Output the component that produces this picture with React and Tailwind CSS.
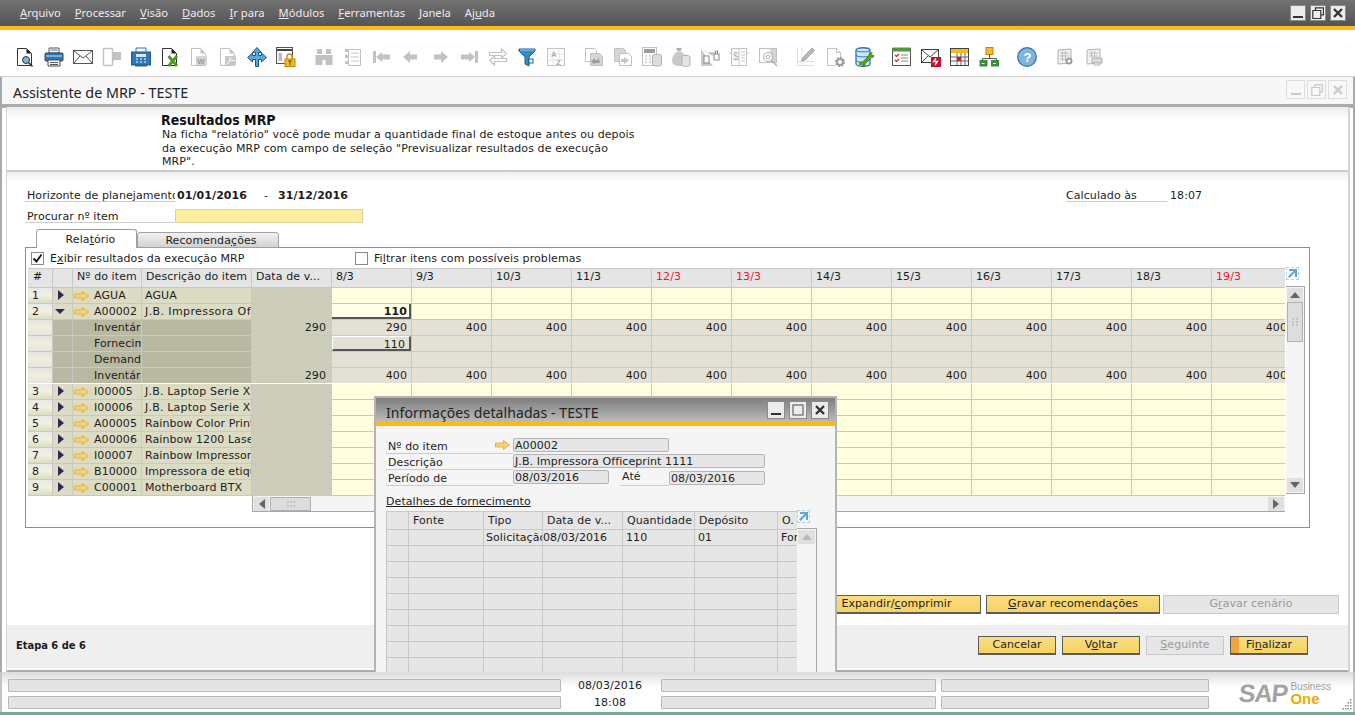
import { Fragment } from "react";

const G = "#c2c2c2"; // disabled icon grey
const D = "#b0b0b0";

const Ico = ({ children }) => (
  <svg width="20" height="20" viewBox="0 0 20 20" fill="none" className="shrink-0">
    {children}
  </svg>
);

const Page = ({ c = G, fold = G }) => (
  <>
    <path d="M2.500 1.500h9l5 5v12h-14z" fill="#fff" stroke={c} />
    <path d="M11.500 1.500l5 5h-5z" fill={fold} />
  </>
);

const toolbar = [
  [
    <Ico>
      <Page c="#333" fold="#222" />
      <circle cx="11" cy="13" r="3.500" fill="#7fb2d6" stroke="#333" />
      <path d="M13.500 15.500l4 4" stroke="#333" strokeWidth="1.600" />
    </Ico>,
    <Ico>
      <path d="M5 1h10v5H5z" fill="#fff" stroke="#555" />
      <path d="M6.500 3h7" stroke="#2a78b8" />
      <rect x="1" y="6" width="18" height="8" rx="1" fill="#2a78b8" stroke="#444" />
      <path d="M2 9h16" stroke="#cfe2f0" />
      <path d="M4 13h12v6H4z" fill="#fff" stroke="#444" />
      <path d="M6 15.500h8M6 17.500h8" stroke="#555" />
    </Ico>,
    <Ico>
      <rect x="0.500" y="3.500" width="19" height="13" fill="#fff" stroke="#555" />
      <path d="M1 4l9 7 9-7M1 16l6-7M19 16l-6-7" stroke="#555" />
    </Ico>,
    <Ico>
      <rect x="1.500" y="1.500" width="9" height="17" rx="1" fill="#fff" stroke={G} strokeWidth="1.400" />
      <path d="M10 5h9v8h-6l-3 2z" fill={G} />
    </Ico>,
    <Ico>
      <path d="M5 1h10v5H5z" fill="#fff" stroke="#2a78b8" />
      <rect x="0.500" y="5" width="19" height="13" fill="#2a78b8" stroke="#1d5f94" />
      <rect x="5" y="7" width="10" height="3" fill="#d7e8f4" />
      <path d="M5 12h2M9 12h2M13 12h2M5 15h2M9 15h2M13 15h2" stroke="#fff" />
      <path d="M4 18h12v1.500H4z" fill="#555" />
    </Ico>,
    <Ico>
      <Page c="#333" fold="#222" />
      <path d="M8.500 9l8.500 10M17 9L8.500 19" stroke="#4e9a1e" strokeWidth="2.800" />
    </Ico>,
    <Ico>
      <Page />
      <rect x="7" y="9" width="11" height="9" fill="#d4d4d4" />
      <text x="8.300" y="16.500" fontSize="8" fontWeight="700" fill="#9a9a9a" fontFamily="Liberation Sans">W</text>
    </Ico>,
    <Ico>
      <Page />
      <rect x="7" y="9" width="11" height="9" fill="#c8c8c8" />
      <path d="M8.500 17c3-1 4-4 3.600-7M11 14c2-1 4-1 6 0" stroke="#fff" />
    </Ico>,
    <Ico>
      <path d="M10 0.500l4.500 5h-3v3h3v-2.500l5 4.500-5 4.500V12.500h-3V19.500h-3V12.500h-3V15l-5-4.500 5-4.500v2.500h3v-3h-3z" fill="#5ea5d8" stroke="#14578f" strokeWidth="1" />
    </Ico>,
    <Ico>
      <rect x="0.500" y="0.500" width="16" height="16" fill="#fff" stroke="#555" />
      <path d="M1 3h15" stroke="#444" strokeWidth="2" />
      <rect x="2.500" y="6" width="3.500" height="8" fill="#bbb" />
      <path d="M11 12V9.500a2.500 2.500 0 015 0V12" stroke="#d28a10" strokeWidth="1.300" />
      <rect x="9" y="12" width="10" height="7.500" fill="#f5ba2a" stroke="#c98300" />
      <path d="M12 14h4M14 14v4" stroke="#6a4a00" />
    </Ico>,
  ],
  [
    <Ico>
      <path d="M3 2h5v5H3zM12 2h5v5h-5z" fill={G} />
      <path d="M1.500 8h7v10h-7zM11.500 8h7v10h-7zM8 8h4v5H8z" fill={G} />
    </Ico>,
    <Ico>
      <path d="M5.500 2.500h12v16h-12z" fill="#fff" stroke={G} />
      <path d="M2 2h3v3H2zM2 8h3v3H2zM2 14h3v3H2z" fill={G} />
      <path d="M8 6h8M8 10h8M8 14h8" stroke={G} />
    </Ico>,
    <Ico>
      <path d="M1 4h3v12H1zM10 5v10l-6-5zM10 7.500h8v5h-8z" fill={G} />
    </Ico>,
    <Ico>
      <path d="M9 4v12l-7-6zM9 7.500h7v5H9z" fill={G} />
    </Ico>,
    <Ico>
      <path d="M11 4v12l7-6zM11 7.500H4v5h7z" fill={G} />
    </Ico>,
    <Ico>
      <path d="M19 4h-3v12h3zM10 5v10l6-5zM10 7.500H2v5h8z" fill={G} />
    </Ico>,
    <Ico>
      <path d="M1.500 8.500v-3h12V2l5 4.500-5 4.500V8.500zM18.500 11.500v3h-12V18l-5-4.500 5-4.500v2.500z" fill="#fff" stroke={G} strokeWidth="1.200" />
    </Ico>,
    <Ico>
      <path d="M2 2h16v2l-6 6v9l-4-2v-7L2 4z" fill="#2f8fc4" stroke="#16608f" />
      <path d="M3 3h14" stroke="#9fd0ec" />
      <rect x="12" y="12" width="4" height="4" fill="#fff" stroke="#16608f" />
    </Ico>,
    <Ico>
      <rect x="1.500" y="1.500" width="17" height="17" fill="#fff" stroke={G} />
      <path d="M1.500 7h17M1.500 13h17M7 1.500v17M13 1.500v17" stroke="#e2e2e2" />
      <text x="5" y="10" fontSize="8" fontWeight="700" fill={D} fontFamily="Liberation Sans">A</text>
      <text x="10" y="18" fontSize="8" fontWeight="700" fill={D} fontFamily="Liberation Sans">Z</text>
    </Ico>,
  ],
  [
    <Ico>
      <path d="M1.500 1.500h9l2 2v11h-11z" fill="#fff" stroke={G} />
      <path d="M6.500 6.500h9l3 3v9h-12z" fill="#d6d6d6" stroke={G} />
      <path d="M14 9v4h-3v-2l-4 3.500 4 3.500v-2h5" fill="#9e9e9e" />
    </Ico>,
    <Ico>
      <path d="M1.500 1.500h9l2 2v11h-11z" fill="#d6d6d6" stroke={G} />
      <path d="M6.500 6.500h9l3 3v9h-12z" fill="#fff" stroke={G} />
      <path d="M8 12h3v-2l5 3.500-5 3.500v-2H8z" fill="#c4c4c4" />
    </Ico>,
    <Ico>
      <rect x="0.500" y="0.500" width="14" height="18" fill="#fff" stroke={G} />
      <rect x="2" y="2" width="11" height="4" fill="#9d9d9d" />
      <path d="M3 9h2M7 9h2M3 12h2M7 12h2M3 15h2M7 15h2" stroke={D} />
      <ellipse cx="15" cy="9" rx="4.500" ry="1.800" fill="#ddd" stroke={D} />
      <path d="M10.500 9v8.500c0 2 9 2 9 0V9" fill="#ddd" stroke={D} />
    </Ico>,
    <Ico>
      <path d="M5 1h6l-1.500 3h-3z" fill={D} />
      <path d="M6 4.500h4c4 2 5 7 5 9 0 4-3 5.500-7 5.500s-7-1.500-7-5.500c0-3 2-7 5-9z" fill="#c9c9c9" />
      <ellipse cx="15" cy="10" rx="4" ry="1.600" fill="#e4e4e4" stroke={D} />
      <path d="M11 10v8c0 2 8 2 8 0v-8" fill="#e4e4e4" stroke={D} />
    </Ico>,
    <Ico>
      <path d="M1 2l5 3.500h7V9M1 2v17h12" fill="#c9c9c9" />
      <path d="M9 6h6" stroke={D} />
      <rect x="4" y="9" width="5" height="7" fill="#fff" stroke="#888" />
      <rect x="14" y="7" width="5" height="6" fill="#fff" stroke="#888" />
      <path d="M15.500 7V4h2v3" stroke="#888" />
    </Ico>,
    <Ico>
      <rect x="2.500" y="1.500" width="15" height="17" fill="#fff" stroke={G} />
      <path d="M10 1.500v17" stroke={G} />
      <path d="M0 6h2M18 6h2M12 5h4M12 8h4M12 11h4M12 14h4" stroke={G} />
      <text x="4" y="13" fontSize="10" fill={D} fontFamily="Liberation Sans">$</text>
    </Ico>,
    <Ico>
      <rect x="1.500" y="1.500" width="17" height="14" fill="#fff" stroke={G} />
      <rect x="12" y="2" width="6" height="13" fill="#d4d4d4" />
      <circle cx="10" cy="10" r="4.500" fill="#fff" stroke={D} />
      <circle cx="10" cy="10" r="2" stroke={D} />
      <path d="M13 13l6 6" stroke={D} strokeWidth="1.400" />
    </Ico>,
  ],
  [
    <Ico>
      <path d="M1.500 1v17.500H18M1 14.500h17M6 1v18" stroke="#dedede" />
      <path d="M16 1l2.500 2.500L9 13l-3.500 1L7 10.500z" fill="#b8b8b8" stroke="#a2a2a2" />
    </Ico>,
    <Ico>
      <path d="M2.500 1.500h9l4 4v6M2.500 1.500v17h8" stroke={G} fill="#fff" />
      <path d="M11.500 1.500v4h4" stroke={G} />
      <circle cx="15" cy="15" r="3" fill="none" stroke="#9a9a9a" strokeWidth="2" />
      <circle cx="15" cy="15" r="4.500" fill="none" stroke="#9a9a9a" strokeWidth="1.300" strokeDasharray="1.800 1.700" />
    </Ico>,
    <Ico>
      <path d="M2 3c0-3 14-3 14 0v14c0 3-14 3-14 0z" fill="#cfe6f5" stroke="#2a78b8" strokeWidth="1.300" />
      <path d="M2 3c0 2.500 14 2.500 14 0M2 8c0 2.500 14 2.500 14 0M2 13c0 2.500 8 2.500 10 2" stroke="#2a78b8" />
      <path d="M18.500 6c-2-1-4 0-3.500 2.500L8.500 15c-2-.5-3.500 1-3 3l2-1 1.500 1.500-1 1.500c2 .5 3.500-1 3-3l6.500-6.500c2 .5 3.500-1 3-3l-2 1-1.500-1.500z" fill="#5aa021" stroke="#2f6a10" strokeWidth=".6" />
    </Ico>,
  ],
  [
    <Ico>
      <rect x="0.500" y="1.500" width="18" height="17" fill="#fff" stroke="#555" />
      <path d="M0.500 0.500h18v4h-18z" fill="#4e9a3e" />
      <path d="M3 8l1.500 1.500L7 7M3 13l1.500 1.500L7 12" stroke="#c22" strokeWidth="1.200" />
      <path d="M9 8h7M9 11h7M9 14h7" stroke="#888" />
    </Ico>,
    <Ico>
      <rect x="0.500" y="2.500" width="17" height="13" fill="#fff" stroke="#444" />
      <path d="M1 3l8 7 8-7M1 15l6-6" stroke="#444" />
      <rect x="10" y="10" width="10" height="10" fill="#c8102e" />
      <path d="M15 11.500l-2.500 3h4l-2.500 3.500" stroke="#fff" strokeWidth="1.300" />
    </Ico>,
    <Ico>
      <rect x="0.500" y="1.500" width="18" height="17" fill="#fff" stroke="#444" />
      <rect x="1" y="2" width="17" height="4" fill="#fdb913" />
      <path d="M1 10h17M1 14h17M7 6v12M11 6v12M15 6v12" stroke="#666" />
      <rect x="7" y="10" width="4" height="4" fill="#d01c1c" />
    </Ico>,
    <Ico>
      <rect x="7" y="0.500" width="7" height="7" fill="#f7b733" stroke="#c98300" />
      <path d="M10.500 7.500v4M3.500 14v-2.500h14V14" stroke="#555" />
      <rect x="0.500" y="13" width="8" height="6.500" fill="#3f8a43" />
      <rect x="12" y="13" width="8" height="6.500" fill="#3f8a43" />
      <path d="M2.500 16.500h3M14 16.500h3" stroke="#d8f0d8" />
    </Ico>,
  ],
  [
    <Ico>
      <circle cx="10" cy="10" r="9.300" fill="#7fb5d9" stroke="#2a6fae" strokeWidth="1.200" />
      <text x="6.500" y="15" fontSize="13" fontWeight="700" fill="#fff" fontFamily="Liberation Sans">?</text>
    </Ico>,
  ],
  [
    <Ico>
      <path d="M3 3l13-1v14l-13 1z" fill="#f2f2f2" stroke={D} />
      <path d="M5 6h9M5 9h9M5 12h5M7.500 4v10M10.500 4v10" stroke="#bdbdbd" />
      <circle cx="14" cy="14" r="2.500" fill="#fff" stroke="#a0a0a0" strokeWidth="2" />
    </Ico>,
    <Ico>
      <path d="M3 3l13-1v14l-13 1z" fill="#f2f2f2" stroke={D} />
      <path d="M5 6h9M5 9h9M7.500 4v6M10.500 4v6" stroke="#bdbdbd" />
      <path d="M8 11h10v5H8z" fill="#d8d8d8" stroke={D} />
      <path d="M10 16h6v2h-6z" fill="#fff" stroke={D} />
    </Ico>,
  ],
];

const LinkArrow = () => (
  <svg width="15" height="10" viewBox="0 0 15 10" className="shrink-0">
    <path d="M0.500 3h8V0.500L14.500 5l-6 4.500V7h-8z" fill="#f8d271" stroke="#d9a93a" strokeWidth=".8" />
  </svg>
);

const ExpandBox = () => (
  <div className="w-[13px] h-[13px] border border-dashed border-[#a9d3ea] flex items-center justify-center shrink-0">
    <svg width="11" height="11" viewBox="0 0 11 11">
      <path d="M2 1h8v8H8V4.500L2.500 10 1 8.500 6.500 3H2z" fill="#5fa6d4" />
    </svg>
  </div>
);

const WinBtn = ({ kind, dim, size = "w-[16px] h-[16px]" }) => {
  const c = dim ? "#c9c9c9" : "#333";
  return (
    <div className={`${size} flex items-center justify-center border ${dim ? "border-[#dedede] bg-[#f8f8f8]" : "border-[#8a8a8a] bg-[#ececec]"}`}>
      <svg width="12" height="12" viewBox="0 0 12 12">
        {kind === "min" && <path d="M1 10h10" stroke={c} strokeWidth="2" />}
        {kind === "max" && <path d="M3.500 3V.800h8v7H9M.800 3.500h8v8h-8z" stroke={c} strokeWidth="1.200" fill="none" />}
        {kind === "box" && <rect x="1" y="1" width="10" height="10" stroke={dim ? c : "#666"} strokeWidth="1.200" fill="none" />}
        {kind === "x" && <path d="M2 2l8 8M10 2l-8 8" stroke={c} strokeWidth="2.400" />}
      </svg>
    </div>
  );
};

const Field = ({ className, children }) => (
  <div className={`h-[14px] bg-[#e6e6e6] border border-[#b4b4b4] rounded-[2px] leading-[13px] pl-[1px] text-[#222] ${className}`}>{children}</div>
);

const Btn = ({ className = "", children, off, accent }) => (
  <div
    className={`relative h-[19px] flex items-center justify-center border overflow-hidden ${
      off
        ? "border-[#c8c8c8] bg-[#e6e6e6] text-[#9a9a9a]"
        : "border-[#5c5c5c] border-b-2 bg-gradient-to-b from-[#f9dd80] to-[#f5d263] text-[#222]"
    } ${className}`}
  >
    {accent && <div className="absolute left-0 top-0 bottom-0 w-[8px] bg-[#f2a63a]" />}
    <span className="relative">{children}</span>
  </div>
);

const ScrollArrow = ({ dir, dim }) => (
  <svg width="10" height="8" viewBox="0 0 10 8" className={dir === "left" ? "rotate-[-90deg]" : dir === "right" ? "rotate-90" : dir === "down" ? "rotate-180" : ""}>
    <path d="M0 7h10L5 1z" fill={dim ? "#b8b8b8" : "#666"} />
  </svg>
);

const Grip = ({ vertical }) => (
  <svg width="8" height="8" viewBox="0 0 8 8" className={vertical ? "" : "rotate-90"}>
    <path d="M1 0h2v2H1zM5 0h2v2H5zM1 3h2v2H1zM5 3h2v2H5zM1 6h2v2H1zM5 6h2v2H5z" fill="#c2c2c2" />
  </svg>
);

const days = ["8/3", "9/3", "10/3", "11/3", "12/3", "13/3", "14/3", "15/3", "16/3", "17/3", "18/3", "19/3"];
const redDays = ["12/3", "13/3", "19/3"];

const cell = "h-full shrink-0 border-r border-[#c8c8c8] overflow-hidden whitespace-nowrap";
const dayW = (i) => (i === 11 ? "w-[73px] border-r-0" : "w-[80px]");

const Caret = ({ open }) => (
  <svg width="12" height="12" viewBox="0 0 12 12" className="-ml-[1px] mt-[1px]">
    {open ? <path d="M0 4h10L5 9z" fill="#2d2a55" /> : <path d="M3 1l6 5-6 5z" fill="#2d2a55" />}
  </svg>
);

const ItemRow = ({ n, item, desc, open, first, wide }) => (
  <div className="flex h-4 border-b border-[#c8c8c8] leading-[15px]">
    <div className={`${cell} w-[25px] pl-[4px] bg-gradient-to-b from-[#e8e8e8] via-[#f3f1de] to-[#dcdcc4]`}>{n}</div>
    <div className={`${cell} w-[20px] pl-[3px] bg-[#dcdcc4]`}>
      <Caret open={open} />
    </div>
    <div className={`${cell} w-[69px] bg-[#dcdcc4] flex items-center gap-[5px] pl-[1px]`}>
      <LinkArrow />
      <span>{item}</span>
    </div>
    <div className={`${cell} w-[110px] pl-[3px] bg-[#dcdcc4] ${wide === "of" ? "tracking-[0.4px]" : wide ? "tracking-[0.2px]" : ""}`}>{desc}</div>
    <div className={`${cell} w-[80px] bg-[#cdcdbb]`} />
    {days.map((d, i) => (
      <div key={d} className={`${cell} ${dayW(i)} bg-[#ffffe0] text-right`}>
        {first && i === 0 && (
          <div className="h-full pr-[2px] border-r-2 border-b-2 border-[#555] font-bold bg-[#ffffe8]">110</div>
        )}
      </div>
    ))}
  </div>
);

const SubRow = ({ label, base, vals, last, raised }) => (
  <div className={`flex h-4 border-b leading-[15px] ${last ? "border-white" : "border-[#c8c8c8]"}`}>
    <div className={`${cell} w-[25px] bg-gradient-to-b from-[#e4e4e4] via-[#f0eeda] to-[#e4e4e4]`} />
    <div className={`${cell} w-[20px] bg-[#b9b9a3]`} />
    <div className={`${cell} w-[69px] bg-[#b9b9a3] pl-[21px]`}>{label}</div>
    <div className={`${cell} w-[110px] bg-[#b9b9a3]`} />
    <div className={`${cell} w-[80px] bg-[#cdcdbb] text-right pr-[5px]`}>{base}</div>
    {days.map((d, i) => (
      <div key={d} className={`${cell} ${dayW(i)} bg-[#e3e1d6] text-right ${i === 11 ? "" : "pr-[4px]"}`}>
        {raised && i === 0 ? (
          <div className="h-full -mr-[4px] pr-[4px] border-r-2 border-b-2 border-t border-l border-t-white border-l-white border-r-[#555] border-b-[#555]">{raised}</div>
        ) : i === 11 && vals ? (
          <span className="inline-block w-[75px]">{vals[i]}</span>
        ) : vals ? (
          vals[i]
        ) : null}
      </div>
    ))}
  </div>
);

const rowsAfter = [
  [3, "I00005", "J.B. Laptop Serie X"],
  [4, "I00006", "J.B. Laptop Serie X"],
  [5, "A00005", "Rainbow Color Printer"],
  [6, "A00006", "Rainbow 1200 Laser"],
  [7, "I00007", "Rainbow Impressora"],
  [8, "B10000", "Impressora de etiquetas"],
  [9, "C00001", "Motherboard BTX"],
];

const v400 = Array(12).fill("400");

const dlgCols = ["w-[23px]", "w-[75px]", "w-[59px]", "w-[80px]", "w-[72px]", "w-[83px]", "w-[19px]"];
const dlgHead = ["", "Fonte", "Tipo", "Data de v...", "Quantidade", "Depósito", "O."];
const dlgRow = ["", "", "Solicitação", "08/03/2016", "110", "01", "Fornecedor"];

const Dialog = () => (
  <div className="absolute left-[374px] top-[366px] w-[463px] h-[300px] border-2 border-[#b4b4b4] bg-[#f5f5f5]">
    <div className="h-[24px] flex items-center bg-gradient-to-b from-[#7e7e7e] to-[#bcbcbc] pl-[10px] pr-[6px] border-b-4 border-[#fdb913] box-content -mb-[1px]">
      <span className="flex-1 text-[14px] text-[#222] font-['Noto_Sans',sans-serif] translate-y-[2px]">Informações detalhadas - TESTE</span>
      <div className="flex gap-[4px]">
        <WinBtn kind="min" size="w-[18px] h-[18px]" />
        <WinBtn kind="box" size="w-[18px] h-[18px]" />
        <WinBtn kind="x" size="w-[18px] h-[18px]" />
      </div>
    </div>
    <div className="pl-[10px] pt-[13px]">
      <div className="flex h-[16px]">
        <div className="w-[127px] border-b border-[#ccc] flex items-end justify-between pr-[3px] leading-[15px] pl-[2px]">
          <span className="translate-y-[1px]">Nº do item</span>
          <span className="mb-[3px]"><LinkArrow /></span>
        </div>
        <Field className="w-[156px]">A00002</Field>
      </div>
      <div className="flex h-[16px]">
        <div className="w-[127px] border-b border-[#ccc] leading-[17px] pl-[2px]">Descrição</div>
        <Field className="w-[252px]">J.B. Impressora Officeprint 1111</Field>
      </div>
      <div className="flex h-[16px]">
        <div className="w-[127px] border-b border-[#ccc] leading-[17px] pl-[2px]">Período de</div>
        <Field className="w-[96px]">08/03/2016</Field>
        <div className="ml-[11px] w-[49px] border-b border-[#ccc] leading-[14px] pl-[2px]">Até</div>
        <Field className="w-[96px] mt-[1px]">08/03/2016</Field>
      </div>
      <div className="mt-[8px] h-[17px] leading-[15px] underline">Detalhes de fornecimento</div>
      <div className="flex">
        <div className="w-[411px] shrink-0">
          <div className="flex h-[19px] bg-[#e6e6e6] border-y border-[#c8c8c8] leading-[17px]">
            {dlgCols.map((w, i) => (
              <div key={i} className={`${w} h-full shrink-0 overflow-hidden whitespace-nowrap border-r border-[#c8c8c8] ${i === 0 ? "border-l" : ""} ${i === 6 ? "pl-[4px] border-r-0" : "pl-[4px]"}`}>
                {dlgHead[i]}
              </div>
            ))}
          </div>
          {Array.from({ length: 9 }).map((_, r) => (
            <div key={r} className="flex h-4 bg-[#e6e6e6] border-b border-[#c8c8c8] leading-[15px]">
              {dlgCols.map((w, i) => (
                <div key={i} className={`${w} h-full shrink-0 overflow-hidden whitespace-nowrap border-r border-[#c8c8c8] ${i === 0 ? "border-l" : ""} ${i === 6 ? "border-r-0" : ""} ${i === 2 ? "pl-[2px]" : i === 3 ? "pl-0" : "pl-[3px]"}`}>
                  {r === 0 ? dlgRow[i] : ""}
                </div>
              ))}
            </div>
          ))}
        </div>
        <div className="w-[20px] shrink-0">
          <div className="h-[18px] -mt-[1px]">
            <ExpandBox />
          </div>
          <div className="h-[180px] bg-[#f5f5f5] border-t border-r border-[#a6a6a6] p-[1px]">
            <div className="h-[14px] bg-[#e0e0e0] flex items-center justify-center">
              <ScrollArrow dir="up" dim />
            </div>
          </div>
        </div>
      </div>
    </div>
  </div>
);

// label text sits one pixel under its box centre in the reference
const lab = "pt-[1px] leading-[13px]";

export default function App() {
  return (
    <div className="w-[1355px] h-[715px] flex flex-col overflow-hidden bg-white text-[11px] text-[#1c1c1c] tracking-[0.08px] font-['DejaVu_Sans',sans-serif]">
      {/* menu bar */}
      <div className="h-[26px] shrink-0 flex items-center pl-[20px] pr-[9px] bg-gradient-to-b from-[#727272] to-[#555356] text-[#ececec] text-[11.200px] tracking-normal font-['Noto_Sans',sans-serif]">
        <div className="flex gap-[14px] flex-1">
          <span><u>A</u>rquivo</span>
          <span><u>P</u>rocessar</span>
          <span><u>V</u>isão</span>
          <span><u>D</u>ados</span>
          <span><u>I</u>r para</span>
          <span><u>M</u>ódulos</span>
          <span><u>F</u>erramentas</span>
          <span><u>J</u>anela</span>
          <span>Aj<u>u</u>da</span>
        </div>
        <div className="flex gap-[4px]">
          <WinBtn kind="min" />
          <WinBtn kind="max" />
          <WinBtn kind="x" />
        </div>
      </div>
      <div className="h-[4px] shrink-0 bg-[#fdb913]" />

      <div className="relative flex-1 min-h-0 flex flex-col overflow-hidden">
        {/* toolbar */}
        <div className="h-[47px] shrink-0 flex items-center gap-[18px] pl-[15px] border-b border-[#cfcfcf] pt-[8px]">
          {toolbar.map((group, g) => (
            <div key={g} className="flex gap-[9px]">
              {group.map((icon, i) => (
                <Fragment key={i}>{icon}</Fragment>
              ))}
            </div>
          ))}
        </div>

        {/* MRP window */}
        <div className="flex-1 min-h-0 flex flex-col border-x-2 border-[#aaaaaa]">
          <div className="h-[27px] shrink-0 flex items-center pl-[11px] pr-[6px] bg-[#f7f7f7] border-b-4 border-[#aaaaaa] box-content -mb-[1px]">
            <span className="flex-1 text-[14.300px] leading-[20px] tracking-normal text-[#222] font-['Noto_Sans',sans-serif] translate-y-[2px]">Assistente de MRP - TESTE</span>
            <div className="flex gap-[2px] -translate-y-[1px]">
              <WinBtn dim kind="min" size="w-[19px] h-[19px]" />
              <WinBtn dim kind="max" size="w-[19px] h-[19px]" />
              <WinBtn dim kind="x" size="w-[19px] h-[19px]" />
            </div>
          </div>

          <div className="flex-1 min-h-0 flex flex-col ml-[4px] mr-[3px] border-l border-r-2 border-[#d4d4d4]">
            {/* header note */}
            <div className="h-[65px] shrink-0 pl-[154px] pt-[6px] border-b-2 border-[#cccccc] bg-gradient-to-b from-[#ececec] to-white to-[20%]">
              <div className="text-[14px] leading-[15px] font-bold text-[#111] tracking-normal font-['DejaVu_Sans_Condensed','DejaVu_Sans',sans-serif]">Resultados MRP</div>
              <div className="pl-[1px] leading-[13.500px] text-[11px] tracking-[0.1px]">
                Na ficha "relatório" você pode mudar a quantidade final de estoque antes ou depois
                <br />
                da execução MRP com campo de seleção "Previsualizar resultados de execução
                <br />
                MRP".
              </div>
            </div>

            {/* form */}
            <div className="flex-1 min-h-0 flex flex-col bg-gradient-to-b from-[#efefef] to-white to-[2%]">
              <div className="h-[14px] mt-[16px] shrink-0 flex">
                <div className={`${lab} ml-[18px] w-[150px] pl-[2px] border-b border-[#ccc] overflow-hidden whitespace-nowrap`}>Horizonte de planejamento</div>
                <div className={`${lab} ml-[2px] font-bold w-[87px]`}>01/01/2016</div>
                <div className={`${lab} w-[14px]`}>-</div>
                <div className={`${lab} font-bold flex-1`}>31/12/2016</div>
                <div className={`${lab} w-[101px] border-b border-[#ccc]`}>Calculado às</div>
                <div className={`${lab} pl-[3px] w-[181px]`}>18:07</div>
              </div>
              <div className="h-[14px] mt-[7px] shrink-0 flex">
                <div className={`${lab} ml-[18px] w-[150px] pl-[2px] border-b border-[#ccc]`}>Procurar nº item</div>
                <div className="w-[188px] bg-[#ffee9e] border border-[#d8d0a0] rounded-[1px]" />
              </div>

              {/* tabs */}
              <div className="h-[19px] mt-[6px] shrink-0 flex items-end pl-[29px] -mb-[1px] relative">
                <div className="w-[101px] h-[19px] pl-[8px] border border-b-0 border-[#a0a0a0] rounded-t-[3px] bg-white text-center leading-[19px]">
                  Rela<u>t</u>ório
                </div>
                <div className="w-[142px] h-[16px] pl-[6px] border border-[#a0a0a0] rounded-t-[3px] bg-gradient-to-b from-[#f2f2f2] to-[#d2d2d2] text-center leading-[16px]">
                  Recomenda<u>ç</u>ões
                </div>
              </div>

              <div className="ml-[18px] w-[1285px] h-[281px] shrink-0 border border-[#8e8e8e] pl-[2px]">
                <div className="h-[20px] flex items-center pl-[3px]">
                  <div className="w-[13px] h-[13px] border border-[#8a8a8a] flex items-center justify-center">
                    <svg width="11" height="11" viewBox="0 0 11 11"><path d="M1.500 5.500l3 3 5-7" stroke="#111" strokeWidth="1.800" fill="none" /></svg>
                  </div>
                  <span className="ml-[6px] w-[305px] translate-y-[1px]">E<u>x</u>ibir resultados da execução MRP</span>
                  <div className="w-[13px] h-[13px] border border-[#8a8a8a] bg-white" />
                  <span className="ml-[6px] translate-y-[1px]">Fi<u>l</u>trar itens com possíveis problemas</span>
                </div>

                <div className="flex">
                  <div className="w-[1257px] shrink-0 overflow-hidden">
                    {/* column header */}
                    <div className="flex h-[20px] bg-[#e5e5e5] border-y border-[#c8c8c8] leading-[16px]">
                      <div className={`${cell} w-[25px] pl-[5px]`}>#</div>
                      <div className={`${cell} w-[20px]`} />
                      <div className={`${cell} w-[69px] pl-[4px]`}>Nº do item</div>
                      <div className={`${cell} w-[110px] pl-[4px]`}>Descrição do item</div>
                      <div className={`${cell} w-[80px] pl-[4px]`}>Data de v...</div>
                      {days.map((d, i) => (
                        <div key={d} className={`${cell} ${dayW(i)} pl-[4px] ${redDays.includes(d) ? "text-[#f0142d]" : ""}`}>{d}</div>
                      ))}
                    </div>
                    <ItemRow n={1} item="AGUA" desc="AGUA" />
                    <ItemRow n={2} item="A00002" desc="J.B. Impressora Officeprint" open first wide="of" />
                    <SubRow label="Inventário inicial" base="290" vals={["290", ...v400.slice(1)]} />
                    <SubRow label="Fornecimento" raised="110" />
                    <SubRow label="Demanda" />
                    <SubRow label="Inventário final" base="290" vals={v400} last />
                    {rowsAfter.map(([n, item, desc]) => (
                      <ItemRow key={n} n={n} item={item} desc={desc} wide={n < 5} />
                    ))}
                    {/* horizontal scroll */}
                    <div className="ml-[224px] h-[16px] bg-[#f5f5f5] border-l border-b border-[#a6a6a6] flex items-center px-[1px] gap-[1px]">
                      <div className="w-[15px] h-[14px] bg-[#e0e0e0] flex items-center justify-center"><ScrollArrow dir="left" /></div>
                      <div className="w-[41px] h-[14px] bg-[#dddddd] border border-[#b0b0b0] flex items-center justify-center"><Grip /></div>
                      <div className="flex-1" />
                      <div className="w-[16px] h-[14px] bg-[#e0e0e0] flex items-center justify-center"><ScrollArrow dir="right" /></div>
                    </div>
                  </div>
                  <div className="ml-[1px] w-[19px] shrink-0">
                    <div className="h-[19px] -mt-[1px]"><ExpandBox /></div>
                    <div className="h-[208px] bg-[#f5f5f5] border-t border-r border-b border-[#a6a6a6] p-[1px] flex flex-col">
                      <div className="h-[14px] bg-[#e0e0e0] flex items-center justify-center"><ScrollArrow dir="up" /></div>
                      <div className="h-[40px] bg-[#dddddd] border border-[#b0b0b0] flex items-center justify-center"><Grip vertical /></div>
                      <div className="flex-1" />
                      <div className="h-[14px] bg-[#e0e0e0] flex items-center justify-center"><ScrollArrow dir="down" /></div>
                    </div>
                  </div>
                </div>
              </div>

              {/* action row */}
              <div className="mt-[67px] shrink-0 flex justify-end gap-[3px] pr-[9px]">
                <Btn className="w-[172px] mr-[2px] pl-[3px]">Expandir/<u>c</u>omprimir</Btn>
                <Btn className="w-[174px]"><u>G</u>ravar recomendações</Btn>
                <Btn off className="w-[176px]">G<u>r</u>avar cenário</Btn>
              </div>

              <div className="mt-[11px] flex-1 min-h-0 flex flex-col">
                <div className="h-[43px] shrink-0 bg-[#efefef] flex items-center pl-[9px] pr-[40px]">
                  <span className="font-bold flex-1 tracking-normal font-['DejaVu_Sans_Condensed','DejaVu_Sans',sans-serif]">Etapa 6 de 6</span>
                  <div className="flex gap-[6px] translate-y-[-1px]">
                    <Btn className="w-[78px]">Cancelar</Btn>
                    <Btn className="w-[78px]">V<u>o</u>ltar</Btn>
                    <Btn off className="w-[78px]"><u>S</u>eguinte</Btn>
                    <Btn accent className="w-[78px]">Fi<u>n</u>alizar</Btn>
                  </div>
                </div>
                <div className="flex-1 bg-white border-b-2 border-[#aaaaaa]" />
              </div>
            </div>
          </div>
        </div>

        <Dialog />
      </div>

      {/* status bar */}
      <div className="h-[43px] shrink-0 flex flex-col border-x-2 border-[#c4c4c4] bg-gradient-to-b from-[#dcdcdc] to-white to-[35%]">
        <div className="flex-1 min-h-0 flex pt-[7px]">
          <div className="grid grid-cols-[553px_100px_275px_273px] gap-x-0 gap-y-[4px] ml-[6px] h-[30px]">
            <div className="h-[13px] bg-[#e4e4e4] border border-[#b8b8b8] rounded-[1px]" />
            <div className="text-center leading-[13px] pr-[2px]">08/03/2016</div>
            <div className="h-[13px] bg-[#e4e4e4] border border-[#b8b8b8] rounded-[1px]" />
            <div className="h-[13px] ml-[5px] bg-[#e4e4e4] border border-[#b8b8b8] rounded-[1px]" />
            <div className="h-[13px] bg-[#e4e4e4] border border-[#b8b8b8] rounded-[1px]" />
            <div className="text-center leading-[13px] pr-[2px]">18:08</div>
            <div className="h-[13px] bg-[#e4e4e4] border border-[#b8b8b8] rounded-[1px]" />
            <div className="h-[13px] ml-[5px] bg-[#e4e4e4] border border-[#b8b8b8] rounded-[1px]" />
          </div>
          <div className="ml-[30px] flex items-center h-[26px] mt-[1px] tracking-normal font-['Liberation_Sans',sans-serif]">
            <span className="text-[25px] leading-[26px] font-bold text-[#a3a3a3] tracking-[-1px] -skew-x-6">SAP</span>
            <div className="ml-[3px] flex flex-col">
              <span className="text-[10px] leading-[10px] text-[#9c9c9c]">Business</span>
              <span className="text-[15px] leading-[13px] font-bold text-[#f0ab00]">One</span>
            </div>
          </div>
          <div className="flex-1 flex items-end justify-end pb-[1px] pr-[1px]">
            <svg width="12" height="12" viewBox="0 0 12 12">
              <path d="M10 0h1.500v1.500H10zM7.500 3H9v1.500H7.500zM10 3h1.500v1.500H10zM5 6h1.500v1.500H5zM7.500 6H9v1.500H7.500zM10 6h1.500v1.500H10zM2.500 9H4v1.500H2.500zM5 9h1.500v1.500H5zM7.500 9H9v1.500H7.500zM10 9h1.500v1.500H10z" fill="#8a8a8a" />
            </svg>
          </div>
        </div>
        <div className="h-[3px] -mx-[2px] shrink-0 bg-[#6cae97]" />
      </div>
    </div>
  );
}
